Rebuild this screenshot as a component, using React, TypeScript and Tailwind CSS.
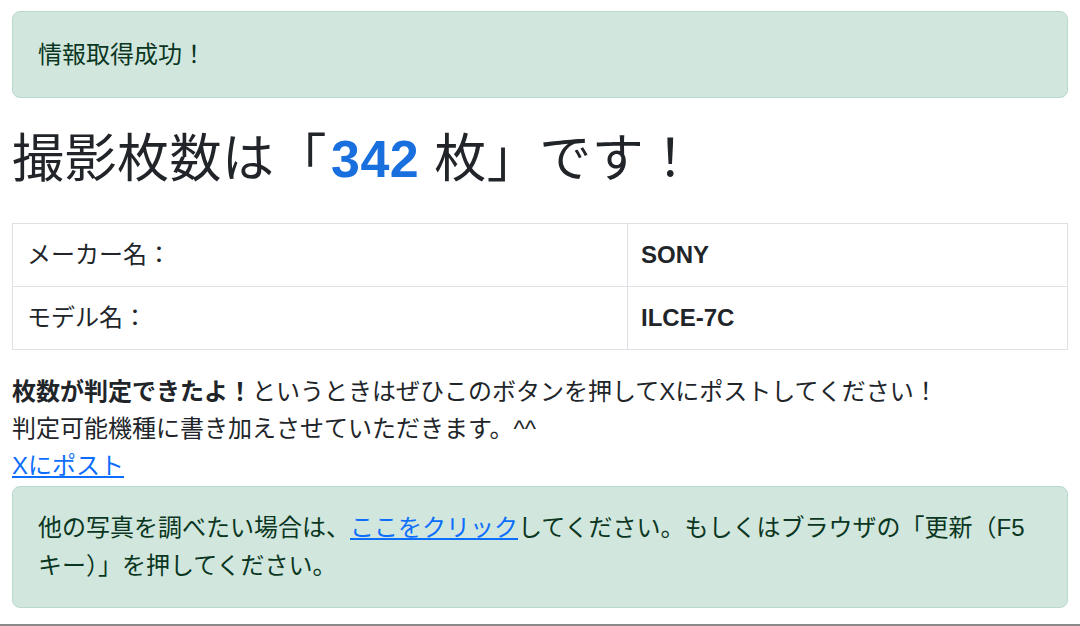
import React from 'react';

const font = "font-['Liberation_Sans','Noto_Sans_CJK_JP',sans-serif]";

export default function App() {
  return (
    <div className={`${font} h-[626px] flex flex-col bg-white text-[#212529] text-[24px] leading-[37px]`}>
      <div className="px-[12px] pt-[11px]">
        {/* 成功メッセージ */}
        <div className="rounded-lg border border-[#badbcc] bg-[#d1e7dd] text-[#0a3622] px-[25px] py-[24.5px] leading-[36px]">
          情報取得成功！
        </div>

        <h1 className="mt-[30px] mb-[33px] text-[52px] leading-[62px] font-normal tracking-[0.5px]">
          撮影枚数は「<span className="font-bold text-[#1a6fdf] ml-[4px]">342</span> 枚」です！
        </h1>

        <table className="w-full border-collapse border border-[#dee2e6] leading-[36px]">
          <tbody>
            <tr>
              <td className="w-[615px] border border-[#dee2e6] px-[14px] py-[13px]">メーカー名：</td>
              <td className="border border-[#dee2e6] px-[13px] py-[13px] font-bold">SONY</td>
            </tr>
            <tr>
              <td className="w-[615px] border border-[#dee2e6] px-[14px] py-[13px]">モデル名：</td>
              <td className="border border-[#dee2e6] px-[13px] py-[13px] font-bold">ILCE-7C</td>
            </tr>
          </tbody>
        </table>

        <p className="mt-[23px]">
          <b>枚数が判定できたよ！</b>というときはぜひこのボタンを押してXにポストしてください！
          <br />
          判定可能機種に書き加えさせていただきます。^^
          <br />
          <a href="#" className="text-[#0d6efd] underline">Xにポスト</a>
        </p>

        <div className="mt-[2px] rounded-lg border border-[#badbcc] bg-[#d1e7dd] text-[#0a3622] px-[25px] py-[22px] leading-[38px]">
          他の写真を調べたい場合は、<a href="#" className="text-[#0d6efd] underline">ここをクリック</a>してください。もしくはブラウザの「更新（F5キー）」を押してください。
        </div>
      </div>
      <div className="mt-auto h-[2px] bg-[#8a8a8a]" />
    </div>
  );
}
